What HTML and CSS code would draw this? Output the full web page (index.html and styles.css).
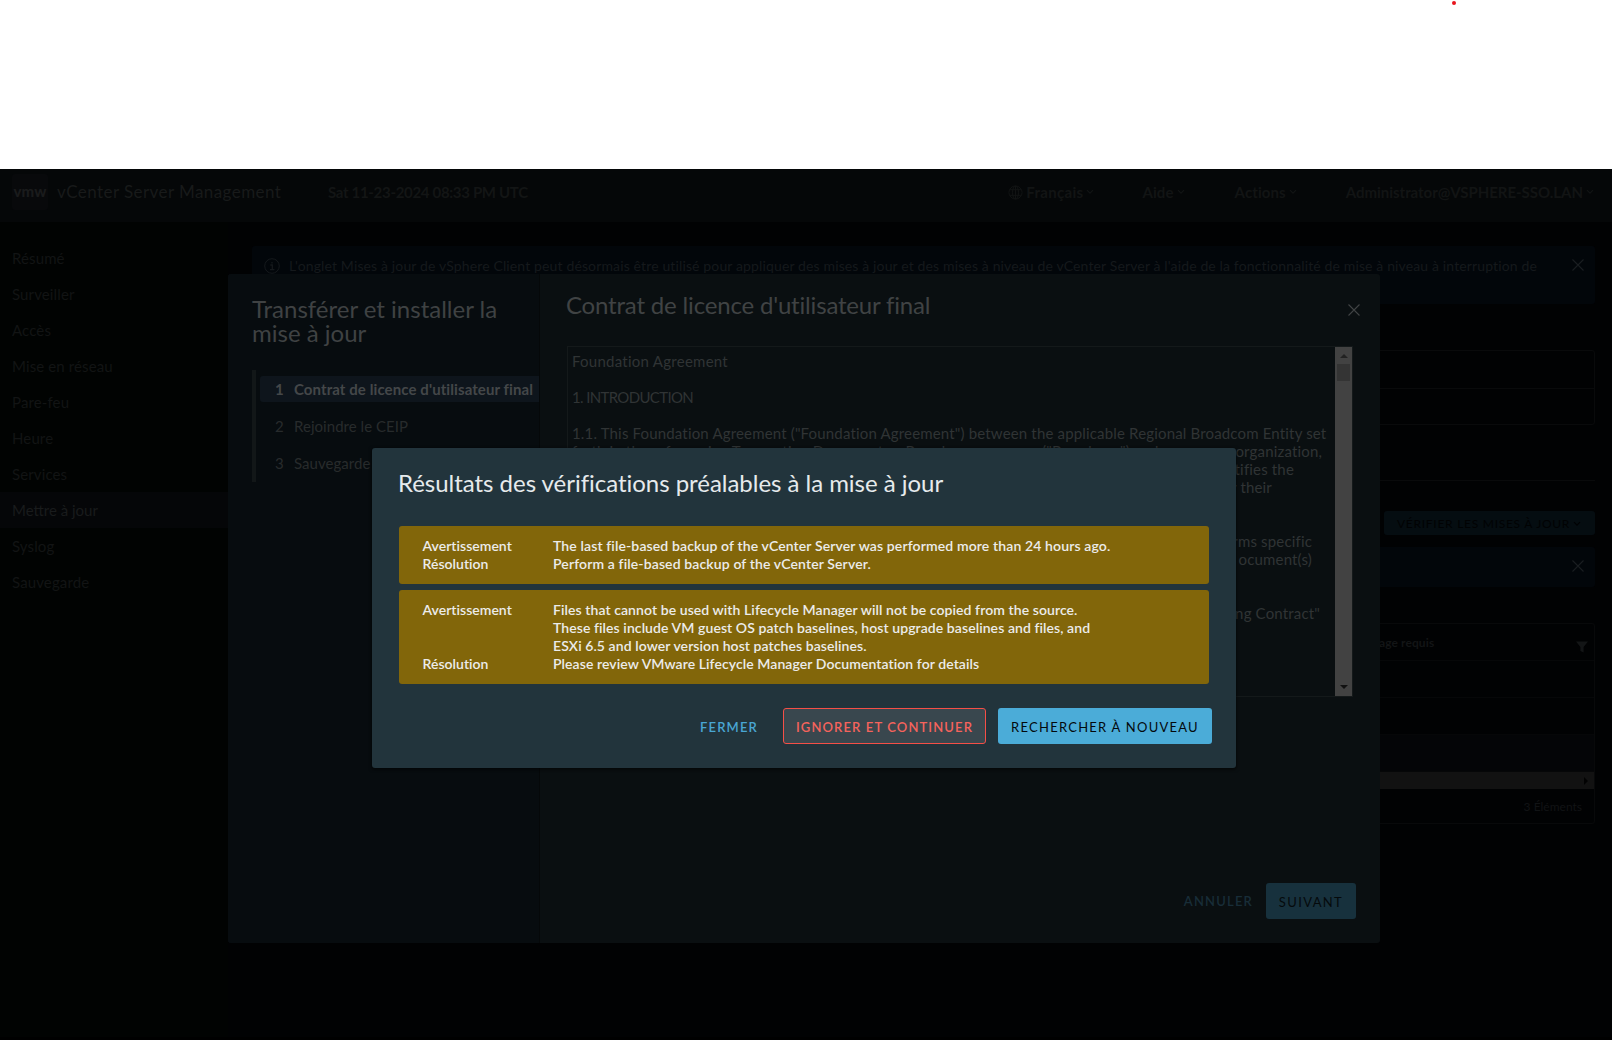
FILE: index.html
```html
<!DOCTYPE html>
<html lang="fr">
<head>
<meta charset="utf-8">
<title>vCenter Server Management</title>
<link rel="stylesheet" href="styles.css">
</head>
<body>
<svg class="defs" width="0" height="0">
  <symbol id="close" viewBox="0 0 12 12"><path d="M.5.5l11 11M11.5.5l-11 11" fill="none" stroke="currentColor" stroke-width="1.1"/></symbol>
  <symbol id="chevron" viewBox="0 0 8 6"><path d="M1 1.2l3 3 3-3" fill="none" stroke="currentColor" stroke-width="1.2"/></symbol>
</svg>
<div class="blank"><span class="dot"></span></div>
<div class="app">
  <header class="header">
    <div class="logo">vmw</div>
    <div class="brand">vCenter Server Management</div>
    <div class="date">Sat 11-23-2024 08:33 PM UTC</div>
    <div class="menus">
      <div class="menu lang">
        <svg class="globe" viewBox="0 0 16 16" fill="none" stroke="currentColor"><circle cx="8" cy="8" r="7"/><ellipse cx="8" cy="8" rx="3.2" ry="7"/><path d="M8 1v14M1.8 5h12.4M1.8 11h12.4"/></svg>
        <span>Français</span><svg class="chev"><use href="#chevron"/></svg>
      </div>
      <div class="menu help"><span>Aide</span><svg class="chev"><use href="#chevron"/></svg></div>
      <div class="menu actions"><span>Actions</span><svg class="chev"><use href="#chevron"/></svg></div>
      <div class="menu user"><span>Administrator@VSPHERE-SSO.LAN</span><svg class="chev"><use href="#chevron"/></svg></div>
    </div>
  </header>
  <div class="body">
    <nav class="nav">
      <a>Résumé</a><a>Surveiller</a><a>Accès</a><a>Mise en réseau</a><a>Pare-feu</a><a>Heure</a><a>Services</a><a class="on">Mettre à jour</a><a>Syslog</a><a>Sauvegarde</a>
    </nav>
    <main class="main">
      <div class="alert first">
        <svg class="info" viewBox="0 0 16 16" fill="none" stroke="currentColor"><circle cx="8" cy="8" r="7.3"/><path d="M6.3 7h2v4.5M6 11.7h4.4M8 4v1.6" stroke-width="1.3"/></svg>
        <p>L'onglet Mises à jour de vSphere Client peut désormais être utilisé pour appliquer des mises à jour et des mises à niveau de vCenter Server à l'aide de la fonctionnalité de mise à niveau à interruption de</p>
        <svg class="x"><use href="#close"/></svg>
      </div>
      <div class="details"><div></div><div></div></div>
      <div class="rule"></div>
      <div class="toolbar"><button class="check">VÉRIFIER LES MISES À JOUR<svg class="chev"><use href="#chevron"/></svg></button></div>
      <div class="alert second"><svg class="x"><use href="#close"/></svg></div>
      <div class="grid">
        <div class="row head"><span>age requis</span><svg class="filter" viewBox="0 0 12 12"><path d="M0 .5h12L7.6 6v5.5L4.4 10V6z" fill="currentColor"/></svg></div>
        <div class="row"></div>
        <div class="row"></div>
        <div class="row alt"></div>
        <div class="hscroll"><i></i></div>
        <div class="foot">3 Éléments</div>
      </div>
    </main>
  </div>
</div>

<section class="wizard">
  <aside class="steps">
    <h2>Transférer et installer la<br>mise à jour</h2>
    <ol>
      <li class="on"><b>1</b><span>Contrat de licence d'utilisateur final</span></li>
      <li><b>2</b><span>Rejoindre le CEIP</span></li>
      <li><b>3</b><span>Sauvegarde</span></li>
    </ol>
  </aside>
  <div class="pane">
    <div class="panehead"><h2>Contrat de licence d'utilisateur final</h2><svg class="x"><use href="#close"/></svg></div>
    <div class="license">
      <div class="text">
        <p class="fa">Foundation Agreement</p>
        <p>&nbsp;</p>
        <p class="intro">1. INTRODUCTION</p>
        <p>&nbsp;</p>
        <p>1.1. This Foundation Agreement ("Foundation Agreement") between the applicable Regional Broadcom Entity set</p>
        <p class="split"><span>forth in the referencing Transaction Document or Broadcom company ("Broadcom") and your</span><span>organization,</span></p>
        <p class="end e1">tifies the</p>
        <p class="end e2">r their</p>
        <p>&nbsp;</p>
        <p>&nbsp;</p>
        <p class="end e3">rms specific</p>
        <p class="end e3">ocument(s)</p>
        <p>&nbsp;</p>
        <p>&nbsp;</p>
        <p class="end e4">ng Contract"</p>
      </div>
      <div class="vscroll"><i class="up"></i><i class="thumb"></i><i class="down"></i></div>
    </div>
    <div class="paneactions"><button class="cancel">ANNULER</button><button class="next">SUIVANT</button></div>
  </div>
</section>

<section class="dialog">
  <h2>Résultats des vérifications préalables à la mise à jour</h2>
  <dl class="warn">
    <dt>Avertissement</dt><dd>The last file-based backup of the vCenter Server was performed more than 24 hours ago.</dd>
    <dt>Résolution</dt><dd>Perform a file-based backup of the vCenter Server.</dd>
  </dl>
  <dl class="warn tight">
    <dt>Avertissement</dt><dd>Files that cannot be used with Lifecycle Manager will not be copied from the source.<br>These files include VM guest OS patch baselines, host upgrade baselines and files, and<br>ESXi 6.5 and lower version host patches baselines.</dd>
    <dt>Résolution</dt><dd>Please review VMware Lifecycle Manager Documentation for details</dd>
  </dl>
  <div class="actions-row"><button class="close">FERMER</button><button class="ignore">IGNORER ET CONTINUER</button><button class="retry">RECHERCHER À NOUVEAU</button></div>
</section>
</body>
</html>
```
FILE: styles.css
```css
* { box-sizing: border-box; }
body { margin: 0; width: 1612px; height: 1040px; overflow: hidden; position: relative; background: #fff; font: 15px/18px Lato, sans-serif; display: flex; flex-direction: column; }
h2, p, dl, dd, ol { margin: 0; padding: 0; font-weight: 400; }
svg { display: block; flex: none; }
.defs { position: absolute; }
button { font: 13px/18px Lato, sans-serif; border: 0; background: none; padding: 0; white-space: nowrap; }
.blank { height: 169px; flex: none; }
.dot { position: absolute; left: 1452px; top: 1px; width: 4px; height: 4px; border-radius: 50%; background: #e8141c; }

/* Application page, dimmed behind the modals */
.app { flex: 1; display: flex; flex-direction: column; background: #010203; border-bottom: 3px solid #000; }
.header { height: 53px; flex: none; background: #050708; color: #181a1a; display: flex; align-items: flex-start; padding: 0 12px; }
.logo { width: 36px; height: 36px; margin-top: 5px; border-radius: 3px; background: #08090b; color: #1a1b1c; font: 900 15px/35px Lato, sans-serif; text-align: center; letter-spacing: .1px; }
.brand { margin: 14px 0 0 9px; width: 271px; font-size: 17px; letter-spacing: .43px; white-space: nowrap; }
.date { margin-top: 14px; font-weight: 700; letter-spacing: -.32px; white-space: nowrap; color: #131515; }
.menus { flex: 1; display: flex; justify-content: flex-end; margin: 14px 6px 0 0; color: #121414; font-weight: 700; }
.menu { display: flex; align-items: center; white-space: nowrap; }
.chev { width: 8px; height: 6px; margin-left: 3px; }
.globe { width: 15px; height: 15px; margin-right: 3px; }
.lang { letter-spacing: .3px; margin-right: 48px; }
.help { letter-spacing: .1px; margin-right: 50px; }
.actions { letter-spacing: .1px; margin-right: 49px; }
.user { letter-spacing: -.03px; }

.body { flex: 1; display: flex; }
.nav { width: 228px; flex: none; padding-top: 18px; background: #010302; display: flex; flex-direction: column; }
.nav a { height: 36px; padding: 0 12px; line-height: 36px; letter-spacing: .12px; color: #121414; }
.nav .on { background: #050608; color: #191b1c; letter-spacing: 0; }
.main { flex: 1; padding: 24px 17px 0 24px; display: flex; flex-direction: column; }
.alert { background: #02060a; border-radius: 3px; display: flex; color: #15191c; }
.first { height: 58px; padding: 11px 11px 0 12px; font-size: 14px; letter-spacing: .135px; white-space: nowrap; }
.first p { flex: 1; padding-left: 9px; }
.info { width: 16px; height: 16px; margin-top: 1px; }
.x { width: 12px; height: 12px; }
.alert .x { color: #1a1e21; margin-top: 2px; }
.details { margin-top: 46px; height: 75px; border: 1px solid #090a0b; border-radius: 3px; }
.details div { height: 37px; }
.details div + div { border-top: 1px solid #090a0b; }
.rule { margin-top: 55px; height: 1px; background: #090a0b; flex: none; }
.toolbar { margin-top: 30px; display: flex; justify-content: flex-end; }
.check { width: 211px; height: 24px; background: #050d11; color: #010203; border-radius: 3px; font-size: 12px; letter-spacing: .73px; display: flex; align-items: center; padding: 1px 0 0 13px; }
.second { margin-top: 12px; height: 40px; padding: 11px 11px 0; justify-content: flex-end; }
.grid { margin-top: 36px; border: 1px solid #08090a; border-radius: 3px; }
.row { height: 37px; border-bottom: 1px solid #060708; }
.head { display: flex; justify-content: space-between; padding: 10px 6px 0 1126px; font-size: 12px; font-weight: 700; color: #131516; letter-spacing: .1px; }
.filter { width: 12px; height: 12px; margin-top: 7px; }
.alt { background: #040507; }
.hscroll { height: 17px; background: #121212; display: flex; align-items: center; justify-content: flex-end; padding-right: 6px; }
.hscroll i { border: 4px solid transparent; border-left-color: #020202; border-right: 0; }
.foot { height: 34px; padding: 9px 12px 0; text-align: right; font-size: 12px; line-height: 18px; color: #111315; }

/* Update wizard */
.wizard { position: absolute; left: 228px; top: 274px; width: 1152px; height: 669px; border-radius: 3px; background: #0a0f11; display: flex; overflow: hidden; }
.steps { width: 312px; flex: none; background: #070c0f; border-right: 1px solid #050809; padding: 23px 0 0 24px; color: #3f4243; }
.steps h2 { font-size: 24px; line-height: 24px; white-space: nowrap; }
.steps ol { margin-top: 25px; height: 112px; border-left: 4px solid #121718; padding: 6px 0 0 4px; list-style: none; }
.steps li { height: 26px; margin-bottom: 11px; display: flex; align-items: center; color: #272b2c; letter-spacing: .04px; white-space: nowrap; }
.steps b { width: 34px; padding-left: 15px; font-weight: inherit; }
.steps .on { background: #0e151c; color: #444749; font-weight: 700; border-radius: 3px 0 0 3px; letter-spacing: .09px; }
.pane { flex: 1; padding: 0 24px 24px 27px; display: flex; flex-direction: column; }
.panehead { height: 72px; display: flex; justify-content: space-between; padding-top: 19px; color: #404344; }
.panehead h2 { font-size: 24px; line-height: 24px; margin-left: -1px; letter-spacing: -.18px; white-space: nowrap; }
.panehead .x { margin: 11px -4px 0 0; }
.license { width: 786px; height: 351px; border: 1px solid #14191a; display: flex; }
.text { width: 767px; flex: 1; padding: 5px 0 0 4px; color: #303435; letter-spacing: .165px; white-space: nowrap; overflow: hidden; }
.fa { letter-spacing: .257px; }
.intro { letter-spacing: -.65px; }
.split { display: flex; justify-content: space-between; padding-right: 13px; }
.end { text-align: right; }
.e1 { padding-right: 41px; }
.e2 { padding-right: 63px; }
.e3 { padding-right: 23px; }
.e4 { padding-right: 15px; }
.vscroll { width: 17px; flex: none; background: #424242; display: flex; flex-direction: column; align-items: center; }
.up { border: 4px solid transparent; border-bottom-color: #222; border-top: 0; margin-top: 7px; }
.thumb { width: 13px; height: 17px; margin-top: 6px; background: #343434; }
.down { border: 4px solid transparent; border-top-color: #111; border-bottom: 0; margin: auto 0 7px; }
.paneactions { margin-top: auto; display: flex; justify-content: flex-end; align-items: center; }
.cancel { font-weight: 600; letter-spacing: 1.17px; color: #182d38; margin-right: 13px; }
.next { width: 90px; height: 36px; border-radius: 3px; background: #17313d; color: #050a0c; letter-spacing: 1.37px; padding-top: 1px; }

/* Pre-check results dialog */
.dialog { position: absolute; left: 372px; top: 448px; width: 864px; height: 320px; border-radius: 3px; background: #22343c; box-shadow: 0 1px 3px 1px rgba(0,0,0,.5); padding: 23px 24px 24px 27px; color: #e6eaec; }
.dialog h2 { font-size: 24px; line-height: 24px; letter-spacing: -.03px; margin: 0 0 31px -1px; white-space: nowrap; }
.warn { width: 810px; margin-bottom: 6px; padding: 11px 24px 11px 23.5px; border-radius: 3px; background: #82660a; color: #ececea; display: grid; grid-template-columns: 130.5px 1fr; font: 600 14px/18px Lato, sans-serif; letter-spacing: .125px; white-space: nowrap; }
.warn dt { letter-spacing: .03px; }
.warn dd { font-weight: 600; }
.tight dd { letter-spacing: .08px; }
.actions-row { margin-top: 24px; display: flex; justify-content: flex-end; align-items: center; }
.close { font-weight: 600; letter-spacing: 1.15px; color: #49a6d3; margin-right: 25px; padding-top: 1px; }
.ignore { width: 203px; height: 36px; margin-right: 12px; border: 1px solid #f54f47; border-radius: 3px; background: #39474e; color: #f5635c; font-weight: 600; letter-spacing: 1.12px; padding-top: 1px; }
.retry { width: 214px; height: 36px; border-radius: 3px; background: #4bacd8; color: #04090c; letter-spacing: 1.25px; padding-top: 1px; }
```
